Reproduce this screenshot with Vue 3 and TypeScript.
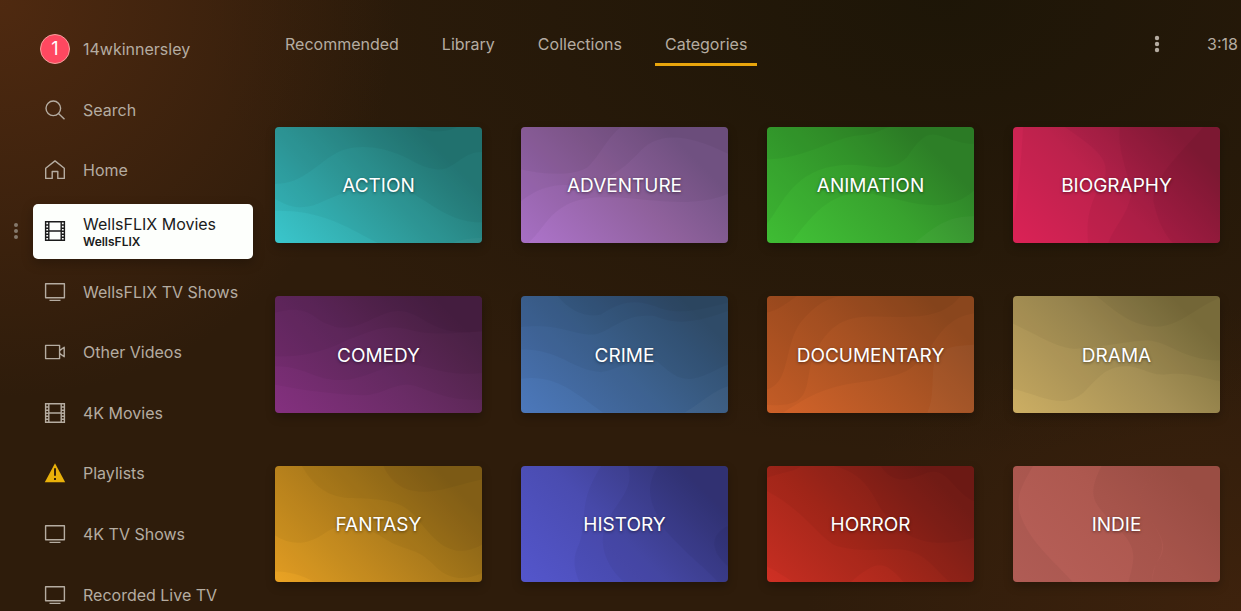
<script setup lang="ts">
type IconName = 'search' | 'home' | 'film' | 'tv' | 'video' | 'warning'

interface NavItem {
  label: string
  icon: IconName
  detail?: string
}

interface Category {
  name: string
  tone: string
  shade: string[]
  light?: string[]
}

const navItems: NavItem[] = [
  { label: 'Search', icon: 'search' },
  { label: 'Home', icon: 'home' },
  { label: 'WellsFLIX Movies', icon: 'film', detail: 'WellsFLIX' },
  { label: 'WellsFLIX TV Shows', icon: 'tv' },
  { label: 'Other Videos', icon: 'video' },
  { label: '4K Movies', icon: 'film' },
  { label: 'Playlists', icon: 'warning' },
  { label: '4K TV Shows', icon: 'tv' },
  { label: 'Recorded Live TV', icon: 'tv' },
]

const tabs: string[] = ['Recommended', 'Library', 'Collections', 'Categories']
const activeTab = 'Categories'

// Wave layers are drawn on a 620 x 348 canvas; "shade" darkens, "light" brightens.
const categories: Category[] = [
  {
    name: 'ACTION',
    tone: 'teal',
    shade: [
      'M0 170C90 170 130 100 200 70C260 50 330 60 400 95C450 125 480 130 510 125C550 110 570 75 620 75V0H0Z',
      'M0 215C60 250 100 245 150 220C220 190 270 165 350 170C440 195 500 285 620 285V0H0Z',
      'M0 250C140 250 200 290 310 348H620V0H0Z',
      'M420 0C470 20 520 15 545 0Z',
    ],
    light: ['M530 348C560 335 590 332 620 332V348Z'],
  },
  {
    name: 'ADVENTURE',
    tone: 'violet',
    shade: [
      'M0 127C80 145 160 145 200 120C240 80 260 30 300 0H0Z',
      'M0 222C60 175 120 165 180 180C280 150 310 120 350 80C400 20 480 10 620 80V0H0Z',
      'M20 348C80 300 90 210 250 210C350 205 500 250 620 200V0H0V348Z',
    ],
  },
  {
    name: 'ANIMATION',
    tone: 'green',
    shade: [
      'M0 97C120 95 200 30 280 25C320 22 340 10 365 0H0Z',
      'M0 290C50 230 80 115 250 113C330 115 370 140 420 90C460 30 480 10 530 30C570 45 600 52 620 50V0H0Z',
      'M70 348C140 260 180 200 290 195C400 215 480 250 560 225C590 215 610 200 620 190V0H0V348Z',
    ],
    light: ['M440 348C500 300 540 265 620 267V348Z'],
  },
  {
    name: 'BIOGRAPHY',
    tone: 'crimson',
    shade: [
      'M30 0C26 80 16 200 0 290V348H620V0Z',
      'M155 0C240 60 290 90 275 150C250 200 215 240 225 348H620V0Z',
      'M320 0C310 70 350 150 355 200C340 270 300 300 285 348H620V0Z',
      'M570 0C500 80 420 150 420 220C430 270 450 320 480 348H620V0Z',
    ],
  },
  {
    name: 'COMEDY',
    tone: 'plum',
    shade: [
      'M0 50C40 40 80 30 130 70C200 110 230 95 280 75C350 40 380 30 450 75C520 115 560 110 620 105V0H0Z',
      'M0 180C100 185 170 155 220 130C300 100 330 85 400 100C470 120 540 110 620 106V0H0Z',
      'M0 210C100 210 120 260 220 250C320 230 330 200 400 200C480 220 540 240 620 230V0H0Z',
      'M0 265C100 285 200 295 270 297C330 290 350 265 400 265C450 270 500 315 620 310V0H0Z',
    ],
  },
  {
    name: 'CRIME',
    tone: 'blue',
    shade: [
      'M110 0C150 50 200 65 240 55C300 15 340 10 400 30C450 55 510 50 620 20V0Z',
      'M0 93C120 80 160 120 220 115C280 100 310 50 400 60C450 80 500 90 620 45V0H0Z',
      'M0 160C120 160 150 220 240 228C310 215 330 180 400 190C440 220 460 250 510 248C560 240 590 215 620 205V0H0Z',
      'M0 247C100 235 150 280 245 348H620V0H0Z',
    ],
    light: ['M490 348C540 320 580 280 620 270V348Z'],
  },
  {
    name: 'DOCUMENTARY',
    tone: 'orange',
    shade: [
      'M0 50C40 40 60 20 90 0H0Z',
      'M0 280C70 260 50 150 100 80C150 20 190 0 240 0H0Z',
      'M0 325C160 340 100 240 150 160C200 60 270 60 350 62C470 65 530 60 580 0H0Z',
      'M50 348C140 290 180 270 300 255C450 230 430 210 480 170C530 80 570 60 620 52V0H0V348Z',
    ],
    light: ['M480 348C510 290 480 200 520 165C560 145 590 150 620 145V348Z'],
  },
  {
    name: 'DRAMA',
    tone: 'sand',
    shade: [
      'M250 0C310 50 360 90 430 92C500 90 540 40 610 10L620 0Z',
      'M0 83C80 120 130 155 190 158C290 150 340 135 400 133C470 135 500 190 620 193V0H0Z',
      'M0 277C90 300 150 340 210 290C270 230 280 210 350 210C400 220 410 235 450 235C520 225 570 245 620 255V0H0Z',
    ],
  },
  {
    name: 'FANTASY',
    tone: 'gold',
    shade: [
      'M325 0C350 60 400 80 460 77C520 70 570 50 620 40V0Z',
      'M80 0C110 50 150 95 230 96C350 100 380 110 420 150C470 210 520 290 620 235V0Z',
      'M0 208C50 240 100 235 150 200C230 150 300 200 350 230C420 260 430 250 480 300C530 350 590 335 620 320V0H0Z',
      'M0 315C40 315 80 325 120 348H620V0H0Z',
    ],
  },
  {
    name: 'HISTORY',
    tone: 'indigo',
    shade: [
      'M240 0C170 110 200 150 175 230C155 270 155 300 175 348H620V0Z',
      'M320 0C350 90 240 130 245 230C250 290 290 330 310 348H620V0Z',
      'M410 0C360 80 400 130 430 190C500 270 560 310 590 348H620V0Z',
      'M620 180C570 200 560 250 620 300Z',
    ],
  },
  {
    name: 'HORROR',
    tone: 'red',
    shade: [
      'M0 35C60 15 90 15 100 0H0Z',
      'M340 0C380 60 430 40 480 20C540 0 560 80 620 105V0Z',
      'M200 0C320 30 320 120 360 150C430 240 520 240 620 215V0Z',
      'M0 75C120 140 160 220 210 240C290 260 350 245 410 250C480 260 510 320 550 348H620V0H0Z',
      'M0 300C40 320 60 335 80 348H250C330 280 350 280 410 348H620V0H0Z',
    ],
  },
  {
    name: 'INDIE',
    tone: 'rose',
    shade: [
      'M60 0C20 70 10 90 20 140C50 230 120 280 180 348H0V0Z',
      'M265 0C220 90 240 110 300 170C370 240 370 260 345 348H415C420 310 420 310 430 290C460 240 450 210 400 150C370 100 370 80 445 0Z',
      'M445 0C370 80 370 100 400 150C460 220 460 250 430 290C420 310 420 330 415 348H620V0Z',
    ],
  },
]
</script>

<template>
  <div class="screen">
    <aside class="sidebar">
      <button class="profile" type="button">
        <span class="avatar">1</span>
        <span>14wkinnersley</span>
      </button>

      <nav class="nav" aria-label="Libraries">
        <div v-for="item in navItems" :key="item.label" class="row">
          <button v-if="item.detail" class="grip" type="button" aria-label="Reorder">
            <svg width="6" height="18" viewBox="0 0 6 18" fill="currentColor" aria-hidden="true">
              <circle cx="3" cy="3" r="2" />
              <circle cx="3" cy="9" r="2" />
              <circle cx="3" cy="15" r="2" />
            </svg>
          </button>
          <a
            href="#"
            class="nav-link"
            :class="{ selected: item.detail }"
            :aria-current="item.detail ? 'page' : undefined"
          >
            <svg
              class="icon"
              :class="{ warning: item.icon === 'warning' }"
              viewBox="0 0 22 22"
              fill="none"
              stroke="currentColor"
              stroke-width="1.4"
              aria-hidden="true"
            >
              <template v-if="item.icon === 'search'">
                <circle cx="9.3" cy="9.3" r="7.3" />
                <path d="M14.5 14.5L20.5 20.3" />
              </template>
              <path
                v-else-if="item.icon === 'home'"
                stroke-linejoin="round"
                d="M1.7 9.2L11 1.9L20.3 9.2V19.4H13.8V12.5H8.2V19.4H1.7Z"
              />
              <template v-else-if="item.icon === 'film'">
                <path d="M1.6 1.7H20.4V20.3H1.6ZM4.8 1.7V20.3M17.2 1.7V20.3M4.8 11H17.2" />
                <path d="M1.6 5H4.8M1.6 8.2H4.8M1.6 11.2H4.8M1.6 14.2H4.8M1.6 17.3H4.8M17.2 5H20.4M17.2 8.2H20.4M17.2 11.2H20.4M17.2 14.2H20.4M17.2 17.3H20.4" />
              </template>
              <path
                v-else-if="item.icon === 'tv'"
                stroke-linejoin="round"
                d="M1.6 2.7H20.4V16.8H1.6ZM5.5 19.4H16.5"
              />
              <path
                v-else-if="item.icon === 'video'"
                stroke-linejoin="round"
                d="M1.6 4.4H15.6V17.6H1.6ZM15.6 9.6L20.2 6.2V15.8L15.6 12.4"
              />
              <template v-else>
                <path d="M11 1.2L21.2 20.2H.8Z" fill="currentColor" stroke="none" />
                <path d="M11 6.3V13.8M11 15.9V18.1" stroke="#2e1c0a" stroke-width="1.9" />
              </template>
            </svg>
            <span class="labels">
              <span class="label">{{ item.label }}</span>
              <span v-if="item.detail" class="detail">{{ item.detail }}</span>
            </span>
          </a>
        </div>
      </nav>
    </aside>

    <main class="content">
      <header class="topbar">
        <nav class="tabs" aria-label="Library views">
          <a
            v-for="tab in tabs"
            :key="tab"
            href="#"
            class="tab"
            :class="{ active: tab === activeTab }"
            :aria-current="tab === activeTab ? 'page' : undefined"
          >{{ tab }}</a>
        </nav>
        <button class="more" type="button" aria-label="More options">
          <svg width="6" height="18" viewBox="0 0 6 18" fill="currentColor" aria-hidden="true">
            <circle cx="3" cy="3" r="2.2" />
            <circle cx="3" cy="9" r="2.2" />
            <circle cx="3" cy="15" r="2.2" />
          </svg>
        </button>
        <time class="clock">3:18</time>
      </header>

      <section class="grid" aria-label="Categories">
        <a v-for="cat in categories" :key="cat.name" href="#" class="card" :class="cat.tone">
          <svg class="waves" viewBox="0 0 620 348" preserveAspectRatio="none" aria-hidden="true">
            <path v-for="d in cat.shade" :key="d" :d="d" class="shade" />
            <path v-for="d in cat.light" :key="d" :d="d" class="light" />
          </svg>
          <span class="card-name">{{ cat.name }}</span>
        </a>
      </section>
    </main>
  </div>
</template>

<style>
body {
  margin: 0;
  background: #2e1c0b;
}
</style>

<style scoped>
.screen {
  display: flex;
  box-sizing: border-box;
  height: 100vh;
  overflow: hidden;
  font-family: Inter, 'Liberation Sans', sans-serif;
  font-size: 16px;
  line-height: 24px;
  color: #b5aca1;
  background:
    radial-gradient(ellipse 32% 65% at 0 0, rgba(90, 46, 18, 0.75), rgba(90, 46, 18, 0) 100%),
    radial-gradient(ellipse 60% 75% at 76% 0, rgba(25, 20, 6, 0.8), rgba(25, 20, 6, 0) 100%),
    radial-gradient(ellipse 35% 50% at 100% 100%, rgba(72, 38, 14, 0.6), rgba(72, 38, 14, 0) 100%),
    #2e1c0b;
}

button {
  padding: 0;
  border: 0;
  background: none;
  color: inherit;
  font: inherit;
  cursor: pointer;
}

a {
  color: inherit;
  text-decoration: none;
}

.sidebar {
  display: grid;
  flex: none;
  grid-template-rows: 1fr 9fr;
  box-sizing: border-box;
  width: 253px;
  height: 606px;
  margin-top: 19px;
}

.profile {
  display: flex;
  align-items: center;
  gap: 13px;
  padding-left: 40px;
}

.avatar {
  box-sizing: border-box;
  width: 30px;
  height: 30px;
  border: 1px solid #f5a09c;
  border-radius: 50%;
  background: #ff4860;
  color: #fff;
  font-size: 18px;
  line-height: 28px;
}

.nav {
  display: grid;
  grid-auto-rows: 1fr;
}

.row {
  display: flex;
  position: relative;
  align-items: center;
  padding-left: 33px;
}

.grip {
  display: flex;
  position: absolute;
  left: 13px;
  color: #85796c;
}

.nav-link {
  display: flex;
  flex: 1;
  align-items: center;
  gap: 17px;
  padding: 8px 11px;
  border-radius: 5px;
}

.selected {
  padding: 9px 11px 10px;
  background: #fdfffc;
  color: #1b1b1b;
  box-shadow: 0 4px 12px rgba(0, 0, 0, 0.25);
}

.icon {
  flex: none;
  width: 22px;
  height: 22px;
}

.warning {
  color: #e9b10a;
}

.labels {
  display: flex;
  flex-direction: column;
  white-space: nowrap;
}

.selected .label {
  line-height: 22px;
}

.detail {
  font-size: 12px;
  font-weight: 600;
  line-height: 14px;
}

.content {
  flex: 1;
  min-width: 0;
  padding-left: 22px;
}

.topbar {
  display: flex;
  align-items: center;
  padding: 22px 3px 0 0;
}

.tabs {
  display: flex;
  flex: 1;
  gap: 23px;
}

.tab {
  padding: 10px 10px 7px;
  border-bottom: 3px solid transparent;
}

.active {
  border-color: #e8a50c;
}

.more {
  display: flex;
  margin-right: 47px;
}

.grid {
  display: grid;
  grid-template-columns: repeat(4, 1fr);
  gap: 53px 39px;
  padding: 61px 21px 0 0;
}

.card {
  display: grid;
  position: relative;
  box-sizing: border-box;
  place-items: center;
  aspect-ratio: 16 / 9;
  overflow: hidden;
  padding-top: 2px;
  border-radius: 4px;
  color: #fff;
  font-size: 19px;
  box-shadow: 0 4px 10px rgba(0, 0, 0, 0.25);
}

.waves {
  position: absolute;
  inset: 0;
  width: 100%;
  height: 100%;
}

.shade {
  fill: rgba(0, 0, 0, 0.04);
}

.light {
  fill: rgba(255, 255, 255, 0.03);
}

.card-name {
  position: relative;
  text-shadow: 0 1px 3px rgba(0, 0, 0, 0.5);
}

.teal { background: linear-gradient(45deg, #3ac6cc, #30a09f 45%, #27807d 80%); }
.violet { background: linear-gradient(45deg, #ae74cc, #8f619c 50%, #755587 80%); }
.green { background: linear-gradient(45deg, #42c537, #38a22e 50%, #2f8529 80%); }
.crimson { background: linear-gradient(45deg, #e4245a, #c42450 45%, #941f3e 85%); }
.plum { background: linear-gradient(45deg, #84307f, #6a2c66 45%, #52254b 85%); }
.blue { background: linear-gradient(45deg, #4c78bb, #406696 45%, #345372 85%); }
.orange { background: linear-gradient(45deg, #d5642a, #ad5524 50%, #90491f 85%); }
.sand { background: linear-gradient(45deg, #ccae63, #a59056 50%, #837540 85%); }
.gold { background: linear-gradient(45deg, #eaa324, #bd871f 45%, #946c19 85%); }
.indigo { background: linear-gradient(45deg, #5456cc, #4a4cb0 45%, #393a82 85%); }
.red { background: linear-gradient(45deg, #cf3024, #ad291c 40%, #802118 85%); }
.rose { background: linear-gradient(45deg, #b86059, #ad584f 55%, #a15146 85%); }
</style>
